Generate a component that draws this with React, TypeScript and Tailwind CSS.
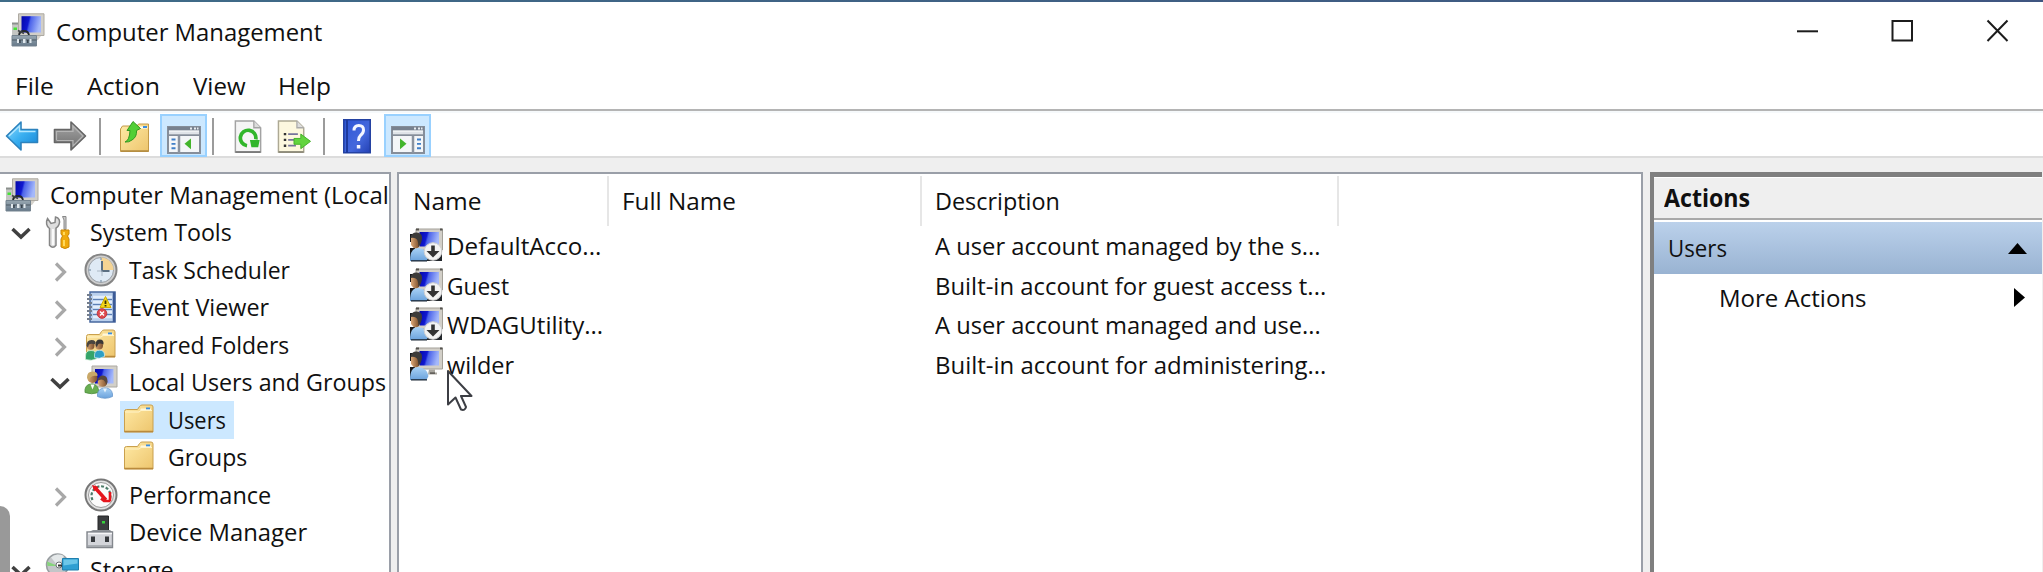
import { useLayoutEffect, useRef, useState } from "react";
import type { ReactNode } from "react";

/** Single-line label condensed or stretched horizontally to a given width. */
function Label({ text, w, bold = false }: { text: string; w: number; bold?: boolean }) {
  const ref = useRef<HTMLSpanElement>(null);
  const [scale, setScale] = useState(1);
  useLayoutEffect(() => {
    if (ref.current) setScale(w / ref.current.offsetWidth);
  }, [w, text]);
  return (
    <span className="block shrink-0" style={{ width: w }}>
      <span
        ref={ref}
        className={
          bold
            ? "inline-block origin-left whitespace-pre align-top text-[24.5px] font-bold leading-[34px]"
            : "inline-block origin-left whitespace-pre align-top text-[24.5px] leading-[34px]"
        }
        style={{ transform: `scaleX(${scale})` }}
      >
        {text}
      </span>
    </span>
  );
}

function Defs() {
  return (
    <svg className="absolute h-0 w-0" aria-hidden="true">
      <defs>
        <linearGradient id="screen" x1="0" y1="0" x2="1" y2="0.2">
          <stop offset="0" stopColor="#0508a8" />
          <stop offset="0.4" stopColor="#1018d0" />
          <stop offset="0.5" stopColor="#4c63ea" />
          <stop offset="1" stopColor="#a4b8fa" />
        </linearGradient>
        <linearGradient id="folder" x1="0" y1="0" x2="1" y2="1">
          <stop offset="0" stopColor="#ffeaa6" />
          <stop offset="1" stopColor="#edc56d" />
        </linearGradient>
        <linearGradient id="blueArrow" x1="0" y1="0" x2="1" y2="1">
          <stop offset="0" stopColor="#8fdcff" />
          <stop offset="0.5" stopColor="#38aef0" />
          <stop offset="1" stopColor="#1583d4" />
        </linearGradient>
        <linearGradient id="grayArrow" x1="0" y1="0" x2="0" y2="1">
          <stop offset="0" stopColor="#a8a8a8" />
          <stop offset="1" stopColor="#6c6c6c" />
        </linearGradient>
        <linearGradient id="help" x1="0" y1="0" x2="1" y2="1">
          <stop offset="0" stopColor="#2d55d6" />
          <stop offset="0.6" stopColor="#4468dc" />
          <stop offset="1" stopColor="#2340b4" />
        </linearGradient>
        <linearGradient id="box" x1="0" y1="0" x2="0" y2="1">
          <stop offset="0" stopColor="#98a7b1" />
          <stop offset="1" stopColor="#66798a" />
        </linearGradient>
        <linearGradient id="shirt" x1="0" y1="0" x2="0" y2="1">
          <stop offset="0" stopColor="#a9d2f6" />
          <stop offset="1" stopColor="#6ba2dc" />
        </linearGradient>
        <linearGradient id="face" x1="0" y1="0" x2="1" y2="0">
          <stop offset="0" stopColor="#dca877" />
          <stop offset="1" stopColor="#7b4f2b" />
        </linearGradient>
      </defs>
    </svg>
  );
}

function Svg({ children }: { children: ReactNode }) {
  return (
    <svg className="block h-[34px] w-[34px] shrink-0" viewBox="0 0 34 34">
      {children}
    </svg>
  );
}

const ComputerIcon = () => (
  <Svg>
    <path d="M1 10h7v13H1z" fill="#c4c6c3" />
    <path d="M1 9.500h7v2H1z" fill="#8b908c" />
    <path d="M2.500 14.500h3.500v2.500H2.500z" fill="#45e335" />
    <path d="M7.500 .8h25.500v21.700H7.500z" fill="#d2cfc8" stroke="#aeaaa2" />
    <path d="M10.500 3.200h19.500v16.300H10.500z" fill="url(#screen)" />
    <path d="M24 23h6l-3 4h-3z" fill="#d5d2cb" />
    <path d="M8 22.500q.5-4.500 5-4.500t5 4.500" fill="none" stroke="#23282c" strokeWidth="1.800" />
    <path d="M7 17.500l6 3" stroke="#3f4447" strokeWidth="1.600" />
    <path d="M1 22.500h24.500v10.500H1z" fill="url(#box)" stroke="#74838f" />
    <path d="M1 27h24.500" stroke="#55636e" strokeWidth="1.200" />
    <path d="M6 26h2v4H6zM12 26h2.500v4H12zM18.500 26h2v4h-2z" fill="#dfe7ec" />
    <path d="M8.200 27h1.500v3H8.200zM16 27h1.500v3H16z" fill="#39444d" />
  </Svg>
);

const ToolsIcon = () => (
  <Svg>
    <path
      d="M2.500 3.500L6 8.500l4-1L10.500 2C14 2.500 15.500 6 14 9.500c-.6 1.800-2 3-3 3.700v17q-3 4-6.500 0V13.500C1.500 11.500 .5 7 2.500 3.500z"
      fill="#dedede"
      stroke="#868686"
      strokeWidth="1.500"
    />
    <path d="M8 14v16" stroke="#fafafa" strokeWidth="2" />
    <path d="M17.500 1.500h3.500v13h-2V5z" fill="#c9c9c9" stroke="#888" />
    <path
      d="M16 15h8v4l-1.500 2 1.500 3v8q-4 3-8 0v-8l1.500-3-1.500-2z"
      fill="#f0aa0c"
      stroke="#c98605"
    />
    <path d="M19 17v3M19 25v6" stroke="#ffd95c" strokeWidth="2" />
  </Svg>
);

const ClockIcon = () => (
  <Svg>
    <circle cx="17" cy="17" r="15.500" fill="#cfcfcf" stroke="#858585" strokeWidth="2" />
    <circle cx="17" cy="17" r="12.500" fill="#dfeaf5" stroke="#9aa0a6" />
    <path d="M17 17V4.500A12.500 12.500 0 0 1 29.500 17z" fill="#f5d493" />
    <path d="M18 8v10h7.500" fill="none" stroke="#5b6f82" strokeWidth="2" />
    <path d="M13 18h5v5" fill="none" stroke="#aab7c4" />
    <path d="M17 5v2M17 27v2M5 17h2" stroke="#8fa2b4" strokeWidth="1.500" />
  </Svg>
);

const EventIcon = () => (
  <Svg>
    <path d="M6 2h25v30H6z" fill="#b9cfec" stroke="#47689f" strokeWidth="1.500" />
    <path d="M30 2v30" stroke="#3c5b97" strokeWidth="2.500" />
    <path d="M9 7h19M9 12h19M9 17h19M9 22h19M9 27h19" stroke="#e3edfa" strokeWidth="2.400" />
    <path d="M9 9.500h19M9 14.500h19M9 19.500h19M9 24.500h19" stroke="#5d7fb4" strokeWidth="1.200" />
    <path
      d="M3 5h5M3 9h5M3 13h5M3 17h5M3 21h5M3 25h5M3 29h5"
      stroke="#737d8c"
      strokeWidth="2"
    />
    <path d="M21.500 6.500l5.500 11h-11z" fill="#f4d51c" stroke="#d0b000" />
    <path d="M21.500 10.500v3.500M21.500 15v1.500" stroke="#3a3200" strokeWidth="1.800" />
    <circle cx="18" cy="23.500" r="4.800" fill="#df4a50" stroke="#c0363d" />
    <path d="M16 21.500l4 4M20 21.500l-4 4" stroke="#fff" strokeWidth="1.500" />
  </Svg>
);

const folderShape = (
  <>
    <path
      d="M2.500 8.500q0-2 2-2h11l2-3q1-1.500 2.500-1.500h9q2 0 2 2v25H2.500z"
      fill="url(#folder)"
      stroke="#c9a04e"
    />
    <path d="M19 5.500h10v2H18z" fill="#fff7dc" />
    <path d="M24 4.500h4v1.800h-4z" fill="#3a8ee0" />
    <path d="M3 9h14l2-1.500h11" fill="none" stroke="#fff3c8" />
    <path d="M2.500 28.500H31" stroke="#b98a3c" strokeWidth="1.500" />
  </>
);

const FolderIcon = () => <Svg>{folderShape}</Svg>;

const SharedIcon = () => (
  <Svg>
    {folderShape}
    <path d="M1.500 28q0-5.500 5.500-5.500t6 5.500v2.500q-5 3-11.500 1z" fill="#35a469" stroke="#d8f0dd" strokeWidth=".7" />
    <circle cx="6.500" cy="17.800" r="4" fill="url(#face)" />
    <path d="M2.500 18q0-6 5-6t4 4.500q-4.500-1.500-6.500 0l-1 3z" fill="#4a4540" />
    <path d="M10.500 27q0-4.800 5-4.800t5 4.800v1.500q-5 3-10 1z" fill="#2f9fc4" stroke="#d5eef8" strokeWidth=".7" />
    <circle cx="15" cy="17.500" r="4" fill="url(#face)" />
    <path d="M11.500 17q0-5.500 4.300-5.500t3.700 5q-4-2-5.500 0l-1.200 3z" fill="#3a3836" />
  </Svg>
);

const GroupsIcon = () => (
  <Svg>
    <path d="M8 1h25v21H8z" fill="#d2cfc8" stroke="#aba8a1" />
    <path d="M11 4h18.500v14.500H11z" fill="url(#screen)" />
    <path d="M1 24.500q1-5.500 6.500-5.500t7 5.500v3q-7 2.500-13.500 0z" fill="#69ae52" stroke="#4c8d3c" strokeWidth=".8" />
    <path d="M6.500 19.500l2 5 2-5z" fill="#fff" />
    <circle cx="8.500" cy="13" r="5" fill="url(#face)" />
    <path d="M3 12.500q0-6 5.500-6t5 4.500q-5-1-7 1.500L4.500 16z" fill="#c9a868" />
    <path d="M13.500 29q1-6 7.500-6t7.500 6v2.500q-7.500 3.500-15 0z" fill="url(#shirt)" stroke="#6797cb" strokeWidth=".8" />
    <path d="M19 23.500l2 4 2-4z" fill="#e8f3fc" />
    <circle cx="18.500" cy="17" r="4.800" fill="url(#face)" />
    <path d="M13.500 16q1-5.500 5.500-5.500t4.500 6l-1 3.500q-1-3.500-3-5-3-1.500-6 1z" fill="#57473c" />
  </Svg>
);

const PerformanceIcon = () => (
  <Svg>
    <circle cx="17" cy="17" r="15.500" fill="#e2e2e2" stroke="#777" strokeWidth="2" />
    <circle cx="17" cy="17" r="12.500" fill="#fbfbfb" stroke="#9b9b9b" />
    <path d="M8.500 22a9.500 9.500 0 1 1 17 0" fill="none" stroke="#4c7b68" strokeWidth="2.200" strokeDasharray="3 1.800" />
    <path d="M10 8.500L22 22" stroke="#e5161d" strokeWidth="3.400" />
    <path d="M17 20.500l3 2.500h6.500M26 14v9" fill="none" stroke="#e5161d" strokeWidth="2.600" />
    <path d="M8 7l6.500 2-4 4.500z" fill="#e5161d" />
  </Svg>
);

const DeviceIcon = () => (
  <Svg>
    <path d="M14 1h10.500v15H14z" fill="#3b3d3f" stroke="#262728" />
    <path d="M18 6h3v2.500h-3z" fill="#35d23a" />
    <path d="M9 15h17l3 2.500H4z" fill="#8f9398" />
    <path d="M3 17h25.500v15.500H3z" fill="#d3d5da" stroke="#83878d" strokeWidth="1.400" />
    <path d="M4 18.500h24" stroke="#f6f6f8" strokeWidth="1.500" />
    <path d="M7 21.500h4V27H7zM21 21.500h4V27h-4z" fill="#36393d" />
    <path d="M4 31h24" stroke="#9da0a6" strokeWidth="1.500" />
  </Svg>
);

const StorageIcon = () => (
  <Svg>
    <circle cx="12.500" cy="12" r="11" fill="#c3c6c8" stroke="#989da0" strokeWidth="1.500" />
    <path d="M13 13L6 4.500A11 11 0 0 1 19 3z" fill="#e4e8e9" />
    <path d="M13 13L2 8.500 2.500 13z" fill="#86d47c" />
    <circle cx="14" cy="12" r="3" fill="#fff" stroke="#6d7275" />
    <path d="M13 12.500h5" stroke="#333" strokeWidth="2" />
    <path d="M17.500 5.500h16V17h-16z" fill="#2f9fd2" stroke="#1f7fae" />
    <path d="M18.500 6.500h14v4l-14 2z" fill="#6cc6e8" />
    <path d="M15 24h14v6H15z" fill="#9aa5aa" />
  </Svg>
);

const UserIcon = ({ disabled }: { disabled: boolean }) => (
  <Svg>
    {disabled && <path d="M10 22h23v11H8z" fill="#23272c" />}
    <path d="M1 6h7v8H1zM1 20h5v13H1z" fill="#16181b" />
    <path d="M7 1h26.500v21H7z" fill="#d2cfc8" stroke="#a3a098" />
    <path d="M7 .5h3v2H7zM31 .5h2.500v2H31z" fill="#55534f" />
    <path d="M10.500 4h19.500v14.500H10.500z" fill="url(#screen)" />
    {!disabled && (
      <>
        <path d="M20 22.500h6v3h2v2h-9z" fill="#aaa7a0" />
        <path d="M21 25.500h5v1.200h-5z" fill="#45433f" />
      </>
    )}
    <path d="M1 33q0-13 8-13 9.500 1 10.500 9l-2 4z" fill="url(#shirt)" />
    <path d="M2 32.200h16v1.300H2z" fill="#1a2634" />
    <path d="M2 8.500h8V19q-4.500 3.500-8-2z" fill="url(#face)" />
    <path d="M1.500 10q.5-5.500 6-5.500 6 .5 5.500 6-.5 5.500-3.500 8.500-.2-5.500-1.500-7.500-2-2.500-6.500-1.500z" fill="#3d3b39" />
    {disabled && (
      <>
        <circle cx="24" cy="23.500" r="8.800" fill="#f3f3f3" stroke="#cfcfcf" />
        <path d="M24 17.500v8" stroke="#333" strokeWidth="3.600" />
        <path d="M17.500 23h13L24 29.500z" fill="#333" />
      </>
    )}
  </Svg>
);

const ChevronDown = () => (
  <svg className="block h-[13px] w-5" viewBox="0 0 20 13">
    <path d="M1.500 2L10 10l8.500-8" fill="none" stroke="#404040" strokeWidth="3.500" />
  </svg>
);
const ChevronRight = () => (
  <svg className="block h-5 w-[13px]" viewBox="0 0 13 20">
    <path d="M2 1.500L10.500 10 2 18.500" fill="none" stroke="#a8a8a8" strokeWidth="3.200" />
  </svg>
);

type Node = {
  text: string;
  w: number;
  level: 0 | 1 | 2 | 3;
  open?: boolean;
  leaf?: boolean;
  selected?: boolean;
  icon: ReactNode;
};

const tree: Node[] = [
  { text: "Computer Management (Local", w: 339, level: 0, leaf: true, icon: <ComputerIcon /> },
  { text: "System Tools", w: 142, level: 1, open: true, icon: <ToolsIcon /> },
  { text: "Task Scheduler", w: 161, level: 2, icon: <ClockIcon /> },
  { text: "Event Viewer", w: 140, level: 2, icon: <EventIcon /> },
  { text: "Shared Folders", w: 160, level: 2, icon: <SharedIcon /> },
  { text: "Local Users and Groups", w: 257, level: 2, open: true, icon: <GroupsIcon /> },
  { text: "Users", w: 58, level: 3, leaf: true, selected: true, icon: <FolderIcon /> },
  { text: "Groups", w: 79, level: 3, leaf: true, icon: <FolderIcon /> },
  { text: "Performance", w: 142, level: 2, icon: <PerformanceIcon /> },
  { text: "Device Manager", w: 178, level: 2, leaf: true, icon: <DeviceIcon /> },
  { text: "Storage", w: 84, level: 1, open: true, icon: <StorageIcon /> },
];

const gutters = ["w-[5px]", "w-[45px]", "w-[84px]", "w-[120px]"];

function TreeRow({ node }: { node: Node }) {
  return (
    <div className="flex h-[37.5px] shrink-0 items-center">
      <div className={`${gutters[node.level]} flex h-full shrink-0 items-center justify-end`}>
        {!node.leaf && (
          <span
            className={
              node.open
                ? node.level === 1
                  ? "mr-[14px] pt-[3px]"
                  : "mr-[14px] pt-[3px]"
                : "mr-[17px] pt-[5px]"
            }
          >
            {node.open ? <ChevronDown /> : <ChevronRight />}
          </span>
        )}
      </div>
      <div
        className={
          node.level === 3
            ? `flex h-full items-center gap-[12px] pl-[2px] ${node.selected ? "bg-[#cce8ff] pr-[8px]" : ""}`
            : "flex h-full items-center gap-[11px]"
        }
      >
        {node.icon}
        <div className="h-[34px]">
          <Label text={node.text} w={node.w} />
        </div>
      </div>
    </div>
  );
}

const users = [
  { name: "DefaultAcco...", nw: 154, desc: "A user account managed by the s...", dw: 386, disabled: true },
  { name: "Guest", nw: 62, desc: "Built-in account for guest access t...", dw: 391, disabled: true },
  { name: "WDAGUtility...", nw: 156, desc: "A user account managed and use...", dw: 386, disabled: true },
  { name: "wilder", nw: 67, desc: "Built-in account for administering...", dw: 391, disabled: false },
];

const Separator = ({ className }: { className: string }) => (
  <div className={`h-[37px] w-[2px] shrink-0 bg-[#9b9b9b] ${className}`} />
);

function PaneIcon({ flip = false }: { flip?: boolean }) {
  return (
    <svg className="mt-[9px] block h-[29px] w-[34px]" viewBox="0 0 34 30" preserveAspectRatio="none">
      <path d="M1 2h32v27H1z" fill="#f4f6f8" stroke="#868e9a" strokeWidth="2" />
      <path d="M1 2h32v3.500H1z" fill="#77818f" />
      <path d="M2 7h30v3H2z" fill="#dfe3e8" />
      <path d="M1 10.500h32" stroke="#858d99" strokeWidth="1.800" />
      <path d="M23 3.700h2M27 3.700h2M30 3.700h1.500" stroke="#e9edf2" strokeWidth="2" />
      {flip ? (
        <>
          <path d="M22 11v18" stroke="#8c94a0" strokeWidth="2.500" />
          <path d="M26 15h4M26 19.500h4M26 24h4" stroke="#3f7fc8" strokeWidth="2" />
          <path d="M9 14v11l6.500-5.500z" fill="#43b52c" />
        </>
      ) : (
        <>
          <path d="M12 11v18" stroke="#8c94a0" strokeWidth="2.500" />
          <path d="M4.500 15h4M4.500 19.500h4M4.500 24h4" stroke="#3f7fc8" strokeWidth="2" />
          <path d="M24 14v11l-6.500-5.500z" fill="#43b52c" />
        </>
      )}
    </svg>
  );
}

const ToggleButton = ({ children }: { children: ReactNode }) => (
  <div className="flex h-[43px] w-[47px] shrink-0 justify-center border-2 border-[#99d1ff] bg-[#cce8ff]">
    {children}
  </div>
);

function Toolbar() {
  return (
    <div className="flex h-[45px] shrink-0 items-center border-b-2 border-[#dcdcdc] bg-white pt-[3px]">
      <svg className="ml-[5px] block h-8 w-[34px] shrink-0" viewBox="0 0 34 32">
        <path d="M1.500 16L16 2v7.500h16.500v13H16V30z" fill="url(#blueArrow)" stroke="#2d82bd" strokeWidth="1.600" strokeLinejoin="round" />
        <path d="M4 16L14.500 6v5.500h16" fill="none" stroke="#b3e7ff" strokeWidth="1.300" />
      </svg>
      <svg className="ml-[14px] block h-8 w-[34px] shrink-0" viewBox="0 0 34 32">
        <path d="M32.500 16L18 2v7.500H1.500v13H18V30z" fill="url(#grayArrow)" stroke="#666" strokeWidth="1.600" strokeLinejoin="round" />
        <path d="M3.500 20v-8.500h16.500V6l10 10-10 10v-5.500H3.500" fill="none" stroke="#b5b5b5" strokeWidth="1.200" />
      </svg>
      <Separator className="ml-3" />
      <svg className="ml-[18px] block h-[33px] w-8 shrink-0" viewBox="0 0 32 33">
        <path d="M1.500 9l2-3H18l1.500-2h10v27.500h-28z" fill="url(#folder)" stroke="#c39a48" />
        <path d="M20 6.500h8.500v2H19z" fill="#fff" />
        <path d="M24 6h4v2h-4z" fill="#3a8ee0" />
        <path d="M2 31h27.500" stroke="#b08a40" strokeWidth="1.500" />
        <path
          d="M6 22q4.500-1.500 5-11.500H8L14 1.500l7.500 7-4 2Q18 17 13 20 10 22.500 6 22z"
          fill="#52cf35"
          stroke="#329920"
          strokeLinejoin="round"
        />
      </svg>
      <div className="ml-[9px] -mt-[2px] self-start">
        <ToggleButton>
          <PaneIcon />
        </ToggleButton>
      </div>
      <Separator className="ml-[5px]" />
      <svg className="ml-[19px] block h-[35px] w-[30px] shrink-0" viewBox="0 0 30 36">
        <path d="M2 2h19l7 7v25H2z" fill="#f5f5f5" stroke="#a3a3a3" strokeWidth="1.500" />
        <path d="M2 34h26" stroke="#777" strokeWidth="1.800" />
        <path d="M21 2v7h7" fill="#dcdcdc" stroke="#a3a3a3" strokeWidth="1.300" />
        <path d="M14 27.500A8 8 0 1 1 23 21" fill="none" stroke="#31b62b" strokeWidth="3.800" />
        <path d="M17 21.500h10l-1.500 7.500h-7z" fill="#31b62b" />
      </svg>
      <svg className="ml-[13px] block h-[35px] w-[36px] shrink-0" viewBox="0 0 36 36">
        <path d="M2 2h19l7 7v25H2z" fill="#fdf8df" stroke="#ada994" strokeWidth="1.500" />
        <path d="M2 34h26" stroke="#8b8878" strokeWidth="1.800" />
        <path d="M21 2v7h7" fill="#ddd" stroke="#aaa" strokeWidth="1.300" />
        <path d="M7.500 15.500h2.500M7.500 21.500h2.500M7.500 27.500h2.500" stroke="#333" strokeWidth="2.400" />
        <path d="M12 15.500h10M12 21.500h8M12 27.500h8" stroke="#77749c" strokeWidth="1.800" />
        <path d="M18 20h7v-4.500L35 23l-10 7.500V26h-7z" fill="#62d43e" stroke="#43b128" strokeLinejoin="round" />
      </svg>
      <Separator className="ml-[11px]" />
      <svg className="ml-[18px] block h-[35px] w-7 shrink-0" viewBox="0 0 28 35">
        <path d="M.8.800h26.400v33H.8z" fill="url(#help)" stroke="#2442a2" strokeWidth="1.600" />
        <path d="M4 1v33" stroke="#1c3a9e" strokeWidth="2" />
        <path
          d="M11 11.500Q11 6.500 15.800 6.500t4.700 4.500q0 3-2.800 5.200-2.200 2-2.200 5.800"
          fill="none"
          stroke="#f4f6ff"
          strokeWidth="3"
        />
        <path d="M13.800 26h3.500v3.500h-3.500z" fill="#f4f6ff" />
      </svg>
      <div className="ml-[13px] -mt-[2px] self-start">
        <ToggleButton>
          <PaneIcon flip />
        </ToggleButton>
      </div>
    </div>
  );
}

export default function App() {
  return (
    <div className="relative flex h-[572px] w-[2043px] flex-col overflow-hidden bg-[#efefef] font-['Open_Sans',sans-serif] text-[#101010]">
      <Defs />
      <div className="h-[2px] shrink-0 bg-linear-to-r from-[#3f6c88] to-[#3f5580]" />

      <header className="flex h-[67px] shrink-0 bg-white">
        <div className="flex pl-[11px] pt-[11px]">
          <ComputerIcon />
          <div className="ml-[11px] pt-[2px]">
            <Label text="Computer Management" w={266} />
          </div>
        </div>
        <div className="ml-auto mr-[34px] flex gap-[72px] pt-[17px]">
          <svg className="block h-6 w-[23px]" viewBox="0 0 23 24">
            <path d="M1 12.300h21" stroke="#1c1c1c" strokeWidth="2" />
          </svg>
          <svg className="block h-6 w-[23px]" viewBox="0 0 23 24">
            <path d="M1.500 2h19.500v19.500H1.500z" fill="none" stroke="#1c1c1c" strokeWidth="2" />
          </svg>
          <svg className="block h-6 w-[23px]" viewBox="0 0 23 24">
            <path d="M1.500 1.500l20 20.500M21.500 1.500l-20 20.500" stroke="#1c1c1c" strokeWidth="2" />
          </svg>
        </div>
      </header>

      <nav className="flex h-[42px] shrink-0 border-b-2 border-[#b4b4b4] bg-white pl-[15px]">
        <Label text="File" w={39} />
        <div className="ml-[33px]">
          <Label text="Action" w={73} />
        </div>
        <div className="ml-[33px]">
          <Label text="View" w={53} />
        </div>
        <div className="ml-[32px]">
          <Label text="Help" w={53} />
        </div>
      </nav>
      <div className="h-[2px] shrink-0 bg-[#f6f9fb]" />
      <Toolbar />

      <main className="mt-[14px] flex min-h-0 grow">
        <aside className="flex w-[391px] shrink-0 flex-col overflow-hidden border-r-2 border-t-2 border-[#9a9fa8] bg-white pt-[2px]">
          {tree.map((n) => (
            <TreeRow key={n.text} node={n} />
          ))}
        </aside>

        <section className="ml-[6px] flex w-[1246px] shrink-0 flex-col border-x-2 border-t-2 border-[#9a9fa8] bg-white pt-[2px]">
          <div className="flex h-[50px] shrink-0">
            <div className="w-[210px] shrink-0 border-r-2 border-[#e6e6e6] pl-[14px] pt-[8px]">
              <Label text="Name" w={69} />
            </div>
            <div className="w-[313px] shrink-0 border-r-2 border-[#e6e6e6] pl-[13px] pt-[8px]">
              <Label text="Full Name" w={114} />
            </div>
            <div className="w-[417px] shrink-0 border-r-2 border-[#e6e6e6] pl-[13px] pt-[8px]">
              <Label text="Description" w={125} />
            </div>
          </div>
          {users.map((u) => (
            <div key={u.name} className="-mt-px mb-[0.600px] flex h-10 shrink-0 items-center pl-[10px]">
              <UserIcon disabled={u.disabled} />
              <div className="ml-[4px] h-[32px] w-[488px] shrink-0">
                <Label text={u.name} w={u.nw} />
              </div>
              <div className="h-[32px]">
                <Label text={u.desc} w={u.dw} />
              </div>
            </div>
          ))}
        </section>

        <section className="ml-[7px] flex w-[392px] shrink-0 flex-col border-l-4 border-t-[5px] border-[#7f7f7f] bg-white pt-px">
          <div className="flex h-[42px] shrink-0 items-start border-b-2 border-[#a9a9a9] bg-[#efefef] pl-[10px] pt-[3px]">
            <Label text="Actions" w={86} bold />
          </div>
          <div className="mt-[2px] flex h-[52px] shrink-0 items-start justify-between bg-linear-to-b from-[#bbd1eb] to-[#99b3d2] pl-[14px] pr-[15px] pt-[9px]">
            <Label text="Users" w={59} />
            <svg className="mt-[12px] block h-[11px] w-[19px]" viewBox="0 0 19 11">
              <path d="M9.500 0L19 11H0z" fill="#000" />
            </svg>
          </div>
          <div className="flex shrink-0 items-start justify-between pl-[65px] pr-[17px] pt-[7px]">
            <Label text="More Actions" w={148} />
            <svg className="mt-[7px] block h-[19px] w-[11px]" viewBox="0 0 11 19">
              <path d="M0 0l11 9.500L0 19z" fill="#000" />
            </svg>
          </div>
        </section>
      </main>

      <svg className="absolute left-[446px] top-[368px] h-[43px] w-[28px]" viewBox="0 0 28 43">
        <path
          d="M2 3v33.500l7.500-7 5.500 12q4 1.500 5-2.500l-5-11h10.500z"
          fill="#fff"
          stroke="#3c3e44"
          strokeWidth="2"
          strokeLinejoin="round"
        />
      </svg>
      <div className="absolute bottom-0 left-0 h-[66px] w-[10px] rounded-tr-[10px] bg-[#999]" />
    </div>
  );
}
